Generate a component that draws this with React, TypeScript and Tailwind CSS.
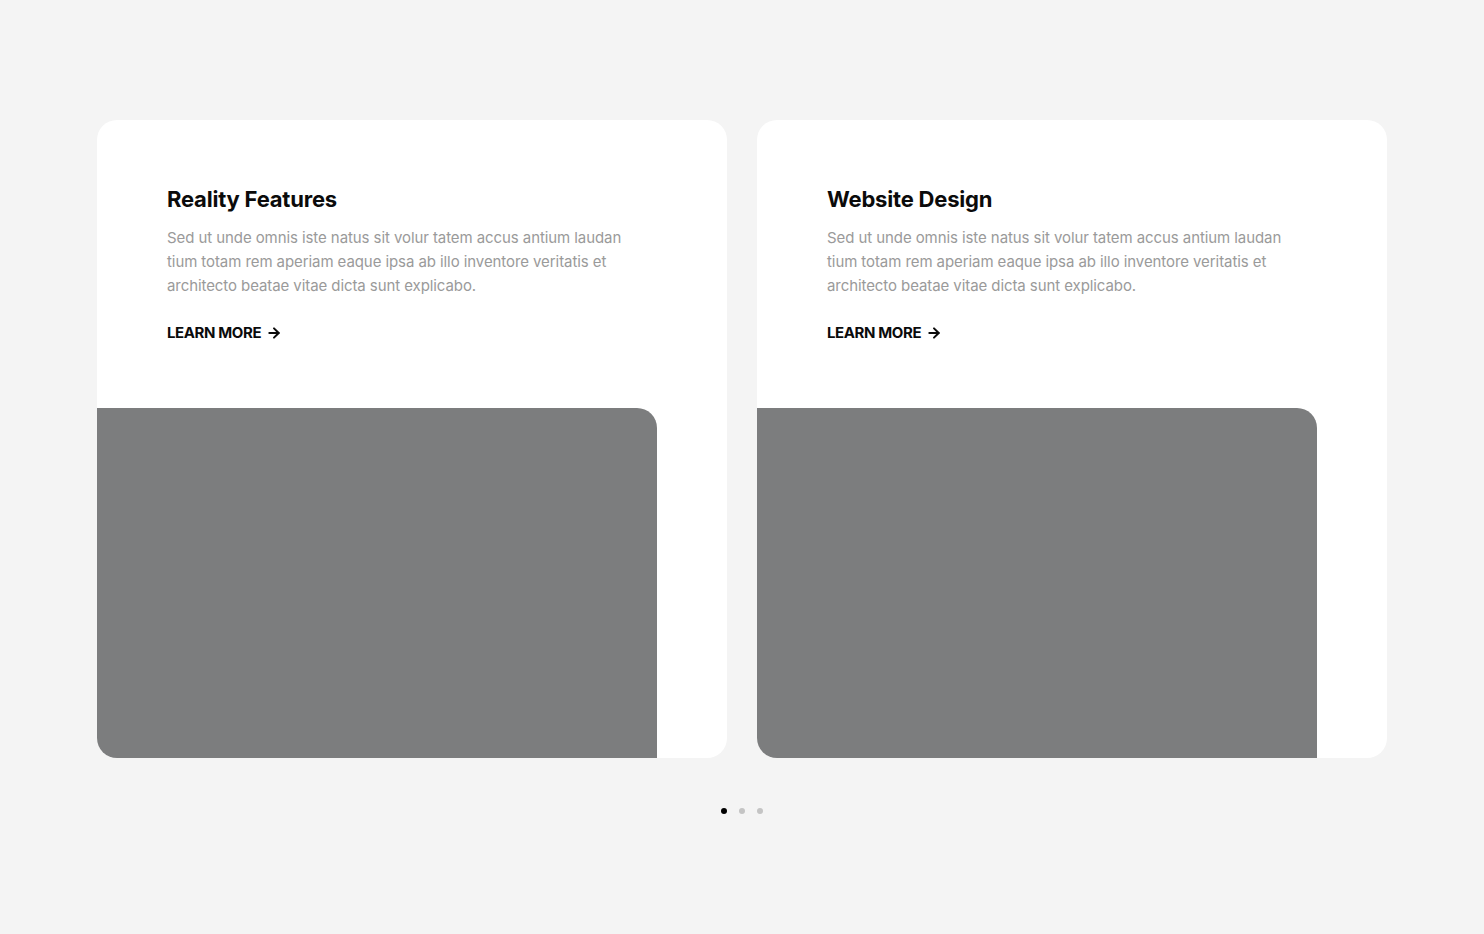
import React from 'react';
import { ArrowRight } from 'lucide-react';

const cards = [
  { title: 'Reality Features' },
  { title: 'Website Design' },
];

const body =
  'Sed ut unde omnis iste natus sit volur tatem accus antium laudan tium totam rem aperiam eaque ipsa ab illo inventore veritatis et architecto beatae vitae dicta sunt explicabo.';

const App: React.FC = () => {
  return (
    <div className="min-h-[934px] bg-[#f4f4f4] pt-[120px] font-['Inter','Liberation_Sans',sans-serif]">
      <div className="flex justify-center gap-[30px]">
        {cards.map(card => (
          <div key={card.title} className="w-[630px] h-[638px] bg-white rounded-[20px] flex flex-col overflow-hidden">
            <div className="pt-[64px] pl-[70px] pr-[100px]">
              <h3 className="text-[22px] leading-[30px] font-bold text-[#0b0b0b] tracking-[-0.2px]">{card.title}</h3>
              <p className="mt-[12px] text-[15px] leading-[24px] text-[#9a9a9a] tracking-[-0.08px] max-w-[462px]">{body}</p>
              <a href="#" className="mt-[23px] inline-flex items-center gap-[5px] text-[15px] leading-[24px] font-bold text-[#0b0b0b] uppercase tracking-[-0.4px]">
                Learn More
                <ArrowRight size={16} strokeWidth={3} />
              </a>
            </div>
            <div className="mt-auto w-[560px] h-[350px] bg-[#7c7d7e] rounded-tr-[20px]" />
          </div>
        ))}
      </div>
      <div className="flex justify-center gap-[12px] mt-[50px]">
        <span className="w-[6px] h-[6px] rounded-full bg-black" />
        <span className="w-[6px] h-[6px] rounded-full bg-[#c4c4c4]" />
        <span className="w-[6px] h-[6px] rounded-full bg-[#c4c4c4]" />
      </div>
    </div>
  );
};

export default App;
